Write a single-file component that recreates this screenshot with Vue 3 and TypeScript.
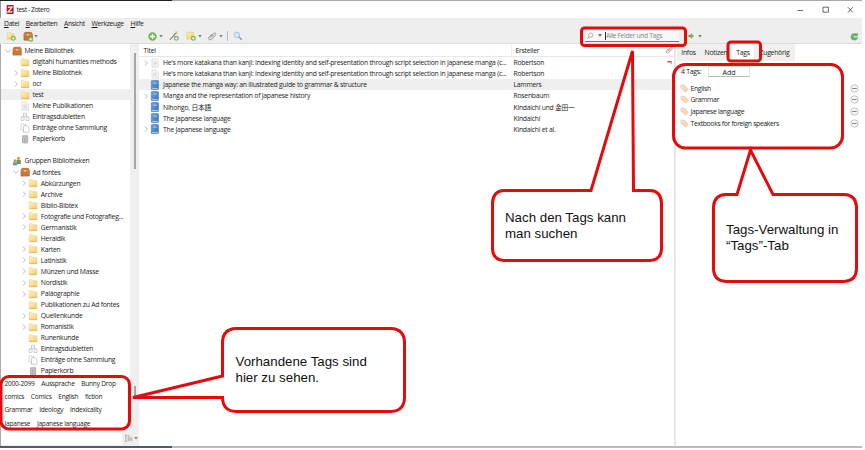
<script setup lang="ts">
interface Node { icon: string; label: string; depth: number; chev?: 'open' | 'closed'; selected?: boolean }
interface Item { title: string; creator: string; icon: string; chev?: boolean; selected?: boolean; flag?: boolean }

const tree: Node[] = [
  { icon: 'library', label: 'Meine Bibliothek', depth: 0, chev: 'open' },
  { icon: 'folder', label: 'digitahl humanities methods', depth: 1 },
  { icon: 'folder', label: 'Meine Bibliothek', depth: 1, chev: 'closed' },
  { icon: 'folder', label: 'ocr', depth: 1, chev: 'closed' },
  { icon: 'folder', label: 'test', depth: 1, selected: true },
  { icon: 'page', label: 'Meine Publikationen', depth: 1 },
  { icon: 'dupes', label: 'Eintragsdubletten', depth: 1 },
  { icon: 'unfiled', label: 'Einträge ohne Sammlung', depth: 1 },
  { icon: 'trash', label: 'Papierkorb', depth: 1 },
  { icon: '', label: '', depth: 0 },
  { icon: 'groups', label: 'Gruppen Bibliotheken', depth: 0 },
  { icon: 'library', label: 'Ad fontes', depth: 1, chev: 'open' },
  { icon: 'folder', label: 'Abkürzungen', depth: 2, chev: 'closed' },
  { icon: 'folder', label: 'Archive', depth: 2, chev: 'closed' },
  { icon: 'folder', label: 'Biblio-Bibtex', depth: 2 },
  { icon: 'folder', label: 'Fotografie und Fotografieg...', depth: 2, chev: 'closed' },
  { icon: 'folder', label: 'Germanistik', depth: 2, chev: 'closed' },
  { icon: 'folder', label: 'Heraldik', depth: 2 },
  { icon: 'folder', label: 'Karten', depth: 2, chev: 'closed' },
  { icon: 'folder', label: 'Latinistik', depth: 2, chev: 'closed' },
  { icon: 'folder', label: 'Münzen und Masse', depth: 2, chev: 'closed' },
  { icon: 'folder', label: 'Nordistik', depth: 2, chev: 'closed' },
  { icon: 'folder', label: 'Paläographie', depth: 2, chev: 'closed' },
  { icon: 'folder', label: 'Publikationen zu Ad fontes', depth: 2 },
  { icon: 'folder', label: 'Quellenkunde', depth: 2, chev: 'closed' },
  { icon: 'folder', label: 'Romanistik', depth: 2, chev: 'closed' },
  { icon: 'folder', label: 'Runenkunde', depth: 2 },
  { icon: 'dupes', label: 'Eintragsdubletten', depth: 2 },
  { icon: 'unfiled', label: 'Einträge ohne Sammlung', depth: 2 },
  { icon: 'trash', label: 'Papierkorb', depth: 2 },
]
const longTitle = "He's more katakana than kanji: Indexing identity and self-presentation through script selection in Japanese manga (c..."
const items: Item[] = [
  { title: longTitle, creator: 'Robertson', icon: 'page', chev: true, flag: true },
  { title: longTitle, creator: 'Robertson', icon: 'page' },
  { title: 'Japanese the manga way: an illustrated guide to grammar & structure', creator: 'Lammers', icon: 'book', selected: true },
  { title: 'Manga and the representation of Japanese history', creator: 'Rosenbaum', icon: 'book', chev: true },
  { title: 'Nihongo, 日本語', creator: 'Kindaichi und 金田一', icon: 'book' },
  { title: 'The Japanese language', creator: 'Kindaichi', icon: 'book' },
  { title: 'The Japanese language', creator: 'Kindaichi et al.', icon: 'book', chev: true },
]
const menus = ['Datei', 'Bearbeiten', 'Ansicht', 'Werkzeuge', 'Hilfe']
const cloud = [
  ['2000-2099', 'Aussprache', 'Bunny Drop'],
  ['comics', 'Comics', 'English', 'fiction'],
  ['Grammar', 'Ideology', 'Indexicality'],
  ['Japanese', 'Japanese language'],
]
const itemTags = ['English', 'Grammar', 'Japanese language', 'Textbooks for foreign speakers']
</script>

<template>
  <div class="screen">
    <svg class="defs" width="0" height="0">
      <defs>
        <linearGradient id="gf" x1="0" y1="0" x2="1" y2="1"><stop offset="0" stop-color="#fff3c4" /><stop offset="1" stop-color="#f3cb66" /></linearGradient>
        <linearGradient id="gb" x1="0" y1="0" x2="1" y2="1"><stop offset="0" stop-color="#6aa6e2" /><stop offset="1" stop-color="#3770b2" /></linearGradient>
        <symbol id="folder" viewBox="0 0 10 10"><path d="M1.3 1.8h3l1 1h3.6v6H1.3z" fill="url(#gf)" stroke="#efd38a" stroke-width=".7" /><path d="M1.500 8.400h7.300" stroke="#e2b452" stroke-width=".8" /></symbol>
        <symbol id="library" viewBox="0 0 10 10"><path d="M1 3.2 2 1.3h6.2L9.3 3.2v5.9H1z" fill="#c8783a" stroke="#ad642c" stroke-width=".7" /><path d="M1.2 3.7h8" stroke="#e0a066" stroke-width=".7" /><path d="M4 3v1.600h2V3" fill="#f1c58e" /></symbol>
        <symbol id="page" viewBox="0 0 10 10"><path d="M2 1h4.300L8.400 3v6.200H2z" fill="#f7f7f7" stroke="#d4d4d4" stroke-width=".7" /><path d="M3.400 4h3.500M3.400 5.500h3.500M3.400 7h3.500" stroke="#c4c4c4" stroke-width=".6" /></symbol>
        <symbol id="dupes" viewBox="0 0 10 10"><path d="M3.500 1.200h3v3h-3zM1 5h3v3.500H1zM6 5h3v3.500H6zM3.500 4 2.500 5M6.500 4l1 1" fill="#fafafa" stroke="#bbb" stroke-width=".7" /></symbol>
        <symbol id="unfiled" viewBox="0 0 10 10"><path d="M1 1h4.500v6H1z" fill="#fff" stroke="#c8c8c8" stroke-width=".7" /><path d="M3.500 2.800h3.600l1.800 1.700v4.700H3.500z" fill="#fff" stroke="#b8b8b8" stroke-width=".7" /></symbol>
        <symbol id="trash" viewBox="0 0 10 10"><path d="M2.500 2.200h5.200v6.300q-2.600 1.200-5.200 0z" fill="#d2d2d2" stroke="#999" stroke-width=".8" /><ellipse cx="5.100" cy="2" rx="2.700" ry=".8" fill="#eee" stroke="#999" stroke-width=".6" /><path d="M4.300 3.500v4.700M6 3.500v4.700" stroke="#888" stroke-width=".6" /></symbol>
        <symbol id="groups" viewBox="0 0 10 10"><circle cx="6.500" cy="2.400" r="1.600" fill="#d9a441" /><path d="M4.500 4h4.300v4H4.500z" fill="#6c9a54" /><circle cx="3" cy="4.800" r="1.500" fill="#c98f55" /><path d="M.8 6.300h4.500v3H.8z" fill="#6f91ba" /></symbol>
        <symbol id="book" viewBox="0 0 10 10"><rect x="1.300" y=".5" width="7.200" height="9.100" rx=".7" fill="url(#gb)" stroke="#3a6ea8" stroke-width=".5" /><path d="M3.200 3.100h3.600M2 8.400h6" stroke="#c3daf2" stroke-width=".8" /></symbol>
        <symbol id="plus" viewBox="0 0 10 10"><circle cx="5" cy="5" r="4.600" fill="#6cb852" /><path d="M5 2.200v5.600M2.200 5h5.600" stroke="#fff" stroke-width="1.600" /></symbol>
        <symbol id="clip" viewBox="0 0 10 10"><path d="m2.800 6.500 3.900-4.200q1.100-.9 1.900 0 .7.9-.1 1.800L4.300 8.400q-1.200.9-2.300 0-1-1.100 0-2.200L5.200 3M4 6.600l2.800-2.900" fill="none" stroke="#8d8d8d" stroke-width=".9" /></symbol>
        <symbol id="tag" viewBox="0 0 10 10"><path d="M1 1.200h3.800L9.400 6 6.100 9.200 1 4.500z" fill="#f5d6ba" stroke="#ecc5a4" stroke-width=".6" /><circle cx="2.700" cy="2.800" r=".7" fill="#fff" /></symbol>
      </defs>
    </svg>

    <div class="desktop"></div>
    <header class="titlebar">
      <svg class="logo" viewBox="0 0 8 10"><path d="M.3 0H8v10H.3z" fill="#b01c20" /><path d="M1.700 2.300h4.600L1.800 7.700h4.800" fill="none" stroke="#fff" stroke-width="1.300" /></svg>
      <span class="apptitle">test - Zotero</span>
      <svg class="winbtns" viewBox="0 0 60 10"><path d="M.5 5.500H6M26 2.200h5.400v5H26zM50.800 2.200l5 5.200M55.800 2.200l-5 5.200" fill="none" stroke="#444" stroke-width=".8" /></svg>
    </header>
    <nav class="menubar">
      <span v-for="m in menus" :key="m"><u>{{ m[0] }}</u>{{ m.slice(1) }}</span>
    </nav>
    <div class="toolbar">
      <div class="tools-left">
        <svg class="ti" viewBox="0 0 12 12"><use href="#folder" x="0" y="0" width="11" height="11" /><use href="#plus" x="5.500" y="5.500" width="6.500" height="6.500" /></svg>
        <svg class="ti lib" viewBox="0 0 12 12"><use href="#library" width="12" height="11" /><use href="#plus" x="6" y="6" width="6" height="6" /></svg>
        <i class="caret"></i>
      </div>
      <div class="tools-mid">
        <svg class="add" viewBox="0 0 10 10"><use href="#plus" width="10" height="10" /></svg><i class="caret c1"></i>
        <svg class="ti wand" viewBox="0 0 12 12"><path d="m1.200 10.500 7-8" stroke="#777" stroke-width="1.300" /><path d="m8 1 2 2M10.500.8 7 4M8.500 0v4" stroke="#b6a668" stroke-width=".7" /><use href="#plus" x="5.500" y="5.500" width="6.500" height="6.500" /></svg>
        <svg class="ti note" viewBox="0 0 12 12"><path d="M1 1.500h8v8H1z" fill="url(#gf)" stroke="#e6c26b" stroke-width=".8" /><use href="#plus" x="5.500" y="5.500" width="6.500" height="6.500" /></svg><i class="caret c1"></i>
        <svg class="ti att" viewBox="0 0 10 10"><use href="#clip" width="10" height="10" /></svg><i class="caret c1"></i>
        <i class="sep"></i>
        <svg class="ti look" viewBox="0 0 10 10"><circle cx="3.800" cy="3.800" r="2.800" fill="#d2e7f8" stroke="#a5c7e4" /><path d="m5.800 5.800 3 3" stroke="#999" stroke-width="1.500" /></svg>
        <div class="search">
          <svg class="mag" viewBox="0 0 8 8"><circle cx="4.600" cy="3.200" r="2.200" fill="none" stroke="#999" stroke-width=".7" /><path d="M3 4.900 1.200 7" stroke="#999" stroke-width=".8" /></svg>
          <i class="caret"></i><b class="cursor"></b><span>Alle Felder und Tags</span>
        </div>
      </div>
      <div class="tools-right">
        <svg class="loc" viewBox="0 0 8 8"><path d="M.8 2.700H4V.7l3.600 3.300L4 7.300v-2H.8z" fill="#7ab35c" stroke="#5c9744" stroke-width=".5" /></svg><i class="caret"></i>
        <svg class="sync" viewBox="0 0 10 10"><path d="M8.300 1v3.500H4.800l1.300-1.200Q3.800 3 3.600 5.300 3.800 7 8.800 6.300 7.500 9.500 4.300 9 .8 8.300 1 5.200q.4-3.800 4.200-3.600 1 0 1.900.6z" fill="#62b56a" stroke="#4fa35c" stroke-width=".5" /></svg>
      </div>
    </div>

    <main class="body">
      <aside class="sidebar">
        <div class="upper">
          <div class="tree">
            <div v-for="(n, i) in tree" :key="i" class="node" :class="['d' + n.depth, { selected: n.selected }]">
              <svg class="chev" viewBox="0 0 8 8"><path v-if="n.chev === 'open'" d="m1.200 2.600 2.800 2.700 2.800-2.700" /><path v-if="n.chev === 'closed'" d="m3 1.600 2.300 2.500L3 6.600" /></svg>
              <svg class="icon" viewBox="0 0 10 10"><use v-if="n.icon" :href="'#' + n.icon" width="10" height="10" /></svg>
              <span>{{ n.label }}</span>
            </div>
          </div>
          <div class="gutter"><i class="thumb"></i></div>
        </div>
        <div class="tagbox">
          <div class="cloud">
            <div v-for="(row, i) in cloud" :key="i" class="cloudrow"><span v-for="t in row" :key="t">{{ t }}</span></div>
          </div>
          <div class="gutter low"><i class="thumb short"></i></div>
        </div>
        <div class="filter"><div class="field"></div>
          <svg class="filtericon" viewBox="0 0 10 10"><path d="M1 1.500h2M2 1.500V8M1 8h2.500M4.700 1v7M6.700 3v5M8.700 4v4" fill="none" stroke="#a49684" stroke-width=".9" /></svg><i class="caret"></i>
        </div>
      </aside>

      <section class="list">
        <div class="lhead"><span class="ht">Titel</span><span class="hc">Ersteller</span><svg class="hclip" viewBox="0 0 10 10"><use href="#clip" width="10" height="10" /></svg></div>
        <div v-for="(it, i) in items" :key="i" class="item" :class="{ selected: it.selected }">
          <svg class="chev" viewBox="0 0 8 8"><path v-if="it.chev" d="m3 1.600 2.300 2.500L3 6.600" /></svg>
          <svg class="icon" viewBox="0 0 10 10"><use :href="'#' + it.icon" width="10" height="10" /></svg>
          <span class="title">{{ it.title }}</span><span class="creator">{{ it.creator }}</span>
          <svg v-if="it.flag" class="flag" viewBox="0 0 6 8"><path d="M.5 1.500h5v4.500L4 3.300H.5z" fill="#d4574a" /></svg>
        </div>
      </section>

      <section class="details">
        <div class="tabs"><span class="tab t1">Infos</span><span class="tab t2">Notizen</span><span class="tab t3">Tags</span><span class="tab t4">Zugehörig</span></div>
        <div class="count"><span>4 Tags:</span><button>Add</button></div>
        <div v-for="t in itemTags" :key="t" class="itag">
          <svg class="tagicon" viewBox="0 0 10 10"><use href="#tag" width="10" height="10" /></svg><span>{{ t }}</span>
          <svg class="minus" viewBox="0 0 9 9"><circle cx="4.500" cy="4.500" r="3.700" fill="#f6f6f6" stroke="#b8b8b8" stroke-width=".8" /><path d="M2.200 4.500h4.600" stroke="#888" /></svg>
        </div>
      </section>
    </main>
    <div class="bottomline"></div>

    <svg class="marks" viewBox="0 0 865 450">
      <g stroke="#e40b0d" stroke-width="3" fill="none">
        <g fill="#fff">
          <path d="M504 190.500H591L632.500 51 633.500 190.500H650Q661 191 661.500 203V249Q661 260 650 260.500H504Q493 260 492.500 249V203Q493 191 504 190.500z" />
          <path d="M726 194.500H737L750.500 150 773 194.500H844Q856 195 856.500 207V269Q856 281 844 281.500H726Q714 281 713.500 269V207Q714 195 726 194.500z" />
          <path d="M236 328.500H391Q404 329 404.500 342V398Q404 411 391 411.500H236Q223 411 222.500 398V397.500H133L222.500 376V342Q223 329 236 328.500z" />
        </g>
        <rect x="581.500" y="28" width="104" height="17.500" rx="3" />
        <rect x="728" y="42" width="32.500" height="19" rx="3" />
        <rect x="673.500" y="64.500" width="169" height="83.500" rx="12" />
        <rect x="1" y="376.500" width="128.500" height="52.500" rx="8" />
      </g>
    </svg>
    <p class="note-text n1">Nach den Tags kann<br />man suchen</p>
    <p class="note-text n2">Tags-Verwaltung in<br />“Tags”-Tab</p>
    <p class="note-text n3">Vorhandene Tags sind<br />hier zu sehen.</p>
  </div>
</template>

<style>
body { background: #fff; overflow: hidden; }
</style>
<style scoped>
* { box-sizing: border-box; }
.screen { position: relative; width: 865px; height: 450px; overflow: hidden; padding-right: 3px; display: flex; flex-direction: column; font: 6.800px/11px "Open Sans", "Noto Sans CJK JP", sans-serif; letter-spacing: -.24px; color: #1c1c1c; background: #fff; white-space: nowrap; }
.defs { position: absolute; }
svg { display: block; flex: none; }
i { display: block; flex: none; }
.desktop { height: 1px; flex: none; background: linear-gradient(90deg, #222 0 172px, #aaa 172px); }
.titlebar { height: 17px; flex: none; display: flex; align-items: center; padding-left: 5px; border-left: 1px solid #999; }
.logo { width: 8px; height: 9px; }
.apptitle { margin-left: 2.500px; letter-spacing: -.45px; }
.winbtns { width: 60px; height: 10px; margin-left: auto; margin-right: 5px; }
.menubar { height: 11px; flex: none; background: #eee; display: flex; gap: 6.600px; padding-left: 4px; align-items: center; letter-spacing: -.32px; }
.menubar u { text-underline-offset: 1px; text-decoration-thickness: 1px; }
.toolbar { height: 15px; flex: none; background: #eee; display: flex; border-bottom: 1px solid #ddd; }
.tools-left { display: flex; align-items: center; width: 139px; padding-left: 6px; }
.ti { width: 10px; height: 10px; }
.lib { width: 12px; height: 11px; margin-left: 6px; margin-right: 0; }
.caret { width: 4px; height: 3px; background: #777; clip-path: polygon(0 0, 100% 0, 50% 100%); }
.tools-mid { display: flex; align-items: center; width: 542px; padding-left: 9px; }
.add { width: 9px; height: 9px; }
.c1 { margin-left: 2px; }
.wand { margin-left: 6px; }
.note { margin-left: 7px; }
.att { margin-left: 5px; }
.sep { width: 1px; height: 10px; margin-left: 4px; background: #bbb; }
.look { margin-left: 5px; }
.search { display: flex; align-items: center; margin-left: 342px; width: 94px; height: 12px; background: #f8f8f8; border-bottom: 1px solid #4a83ae; color: #888; }
.mag { width: 8px; height: 8px; margin-left: 1px; margin-right: 4px; }
.cursor { width: 1px; height: 8px; background: #333; margin-left: 3px; }
.search span { letter-spacing: -.37px; }
.tools-right { display: flex; align-items: center; flex: 1; padding-left: 7px; padding-right: 3px; }
.loc { width: 6px; height: 6px; margin-right: 4px; }
.sync { width: 9px; height: 9px; margin-left: auto; }
.body { height: 402px; flex: none; display: flex; }
.sidebar { width: 139px; flex: none; display: flex; flex-direction: column; border-left: 1px solid #aaa; }
.upper { height: 332px; display: flex; overflow: hidden; }
.tree { width: 129px; padding-top: 1px; }
.gutter { width: 9px; background: #efefef; display: flex; justify-content: center; padding-top: 9px; }
.thumb { width: 2px; height: 116px; background: #a6a6a6; }
.node { height: 11.050px; display: flex; align-items: center; padding-left: 2.500px; }
.node.d1 { padding-left: 10.500px; }
.node.d2 { padding-left: 18.800px; }
.selected { background: #efefef; }
.chev { width: 8px; height: 8px; }
.chev path { fill: none; stroke: #aaa; stroke-width: .8; }
.icon { width: 10px; height: 10px; }
.node span { margin-left: 3px; }
.tagbox { height: 54px; display: flex; }
.cloud { width: 129px; padding: 1px 0 0 3.500px; }
.cloudrow { display: flex; gap: 6.600px; height: 13.200px; align-items: center; font-size: 6.600px; }
.gutter.low { padding-top: 10px; }
.thumb.short { height: 10px; }
.filter { height: 16px; display: flex; align-items: center; background: #efefef; }
.field { width: 121px; height: 14px; background: #fff; }
.filtericon { width: 9px; height: 9px; margin: 0 1px 0 2px; }
.list { width: 535px; flex: none; }
.lhead { height: 13.300px; display: flex; align-items: center; padding-left: 4.500px; border-bottom: 1px solid #e8e8e8; }
.ht { width: 368px; height: 11px; border-right: 1px solid #eee; }
.hc { width: 153px; padding-left: 4px; }
.hclip { width: 8px; height: 8px; }
.item { height: 11.050px; display: flex; align-items: center; padding-left: 3px; }
.title { width: 350.500px; margin-left: 3px; }
.creator { width: 150px; }
.flag { width: 5px; height: 8px; margin-left: 3px; }
.details { flex: 1; border-left: 2px solid #e8e8e8; }
.tabs { height: 17px; display: flex; padding-left: 1px; }
.tab { height: 17px; line-height: 18px; background: #f0f0f0; text-align: center; }
.t1 { width: 23px; }
.t2 { width: 32px; }
.t3 { width: 22px; background: #fff; }
.t4 { width: 41px; }
.count { height: 21.500px; display: flex; align-items: center; padding-left: 5px; }
.count span { width: 27px; }
button { width: 42px; height: 11px; padding: 0; background: #fff; border: 1px solid #e2e2e2; border-bottom-color: #bbb; font: inherit; line-height: 8px; font-size: 7.200px; letter-spacing: -.1px; color: #222; }
.itag { height: 11.600px; display: flex; align-items: center; padding-left: 3.500px; padding-right: 3.500px; letter-spacing: -.32px; }
.tagicon { width: 9px; height: 9px; margin-right: 2px; }
.minus { width: 9px; height: 9px; margin-left: auto; }
.bottomline { height: 2px; flex: none; background: linear-gradient(90deg, #555b66 0 172px, #bbb 172px); }
.marks { position: absolute; left: 0; top: 0; width: 865px; height: 450px; }
.note-text { position: absolute; margin: 0; font: 13.300px/16px "Liberation Sans", sans-serif; letter-spacing: 0; color: #111; }
.n1 { left: 505px; top: 210px; }
.n2 { left: 726px; top: 222px; }
.n3 { left: 235.500px; top: 354px; }
</style>
